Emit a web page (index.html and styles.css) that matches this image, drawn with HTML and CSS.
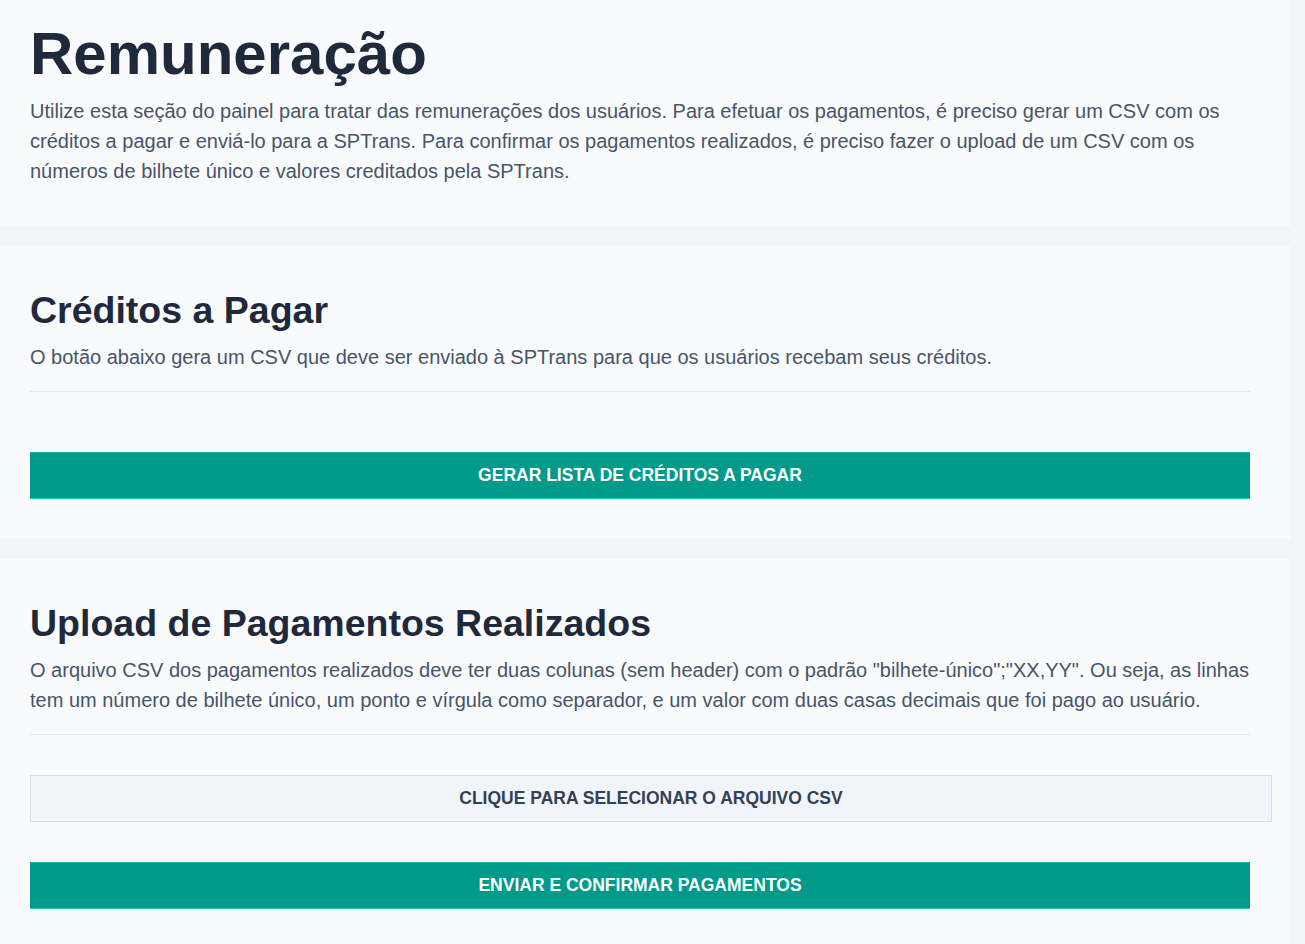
FILE: index.html
```html
<!DOCTYPE html>
<html lang="pt-BR">
<head>
<meta charset="utf-8">
<title>Remuneração</title>
<link rel="stylesheet" href="styles.css">
</head>
<body>
<main class="page">
  <section class="card card-intro">
    <h1 class="title">Remuneração</h1>
    <p class="text">Utilize esta seção do painel para tratar das remunerações dos usuários. Para efetuar os pagamentos, é preciso gerar um CSV com os créditos a pagar e enviá-lo para a SPTrans. Para confirmar os pagamentos realizados, é preciso fazer o upload de um CSV com os números de bilhete único e valores creditados pela SPTrans.</p>
  </section>
  <section class="card">
    <h2 class="subtitle">Créditos a Pagar</h2>
    <p class="text">O botão abaixo gera um CSV que deve ser enviado à SPTrans para que os usuários recebam seus créditos.</p>
    <hr class="divider">
    <button class="btn btn-spaced" type="button">Gerar lista de créditos a pagar</button>
  </section>
  <section class="card">
    <h2 class="subtitle">Upload de Pagamentos Realizados</h2>
    <p class="text">O arquivo CSV dos pagamentos realizados deve ter duas colunas (sem header) com o padrão "bilhete-único";"XX,YY". Ou seja, as linhas tem um número de bilhete único, um ponto e vírgula como separador, e um valor com duas casas decimais que foi pago ao usuário.</p>
    <hr class="divider">
    <label class="file-picker">Clique para selecionar o arquivo CSV</label>
    <button class="btn btn-send" type="button">Enviar e confirmar pagamentos</button>
  </section>
</main>
</body>
</html>
```
FILE: styles.css
```css
* { margin: 0; }
html, body {
  background: #f1f5f9;
}
body {
  margin: 0;
  font-family: "Liberation Sans", Arial, sans-serif;
  color: #1e293b;
}
.page {
  width: 1290px;
  display: flex;
  flex-direction: column;
  gap: 20px;
}
.card {
  background: #f8fafc;
  padding: 44px 40px 40px 30px;
  display: flex;
  flex-direction: column;
}
.card-intro {
  padding-top: 24px;
}
.title {
  font-size: 60px;
  line-height: 60px;
  font-weight: 700;
  color: #1e293b;
}
.subtitle {
  font-size: 37.5px;
  line-height: 40px;
  font-weight: 700;
  color: #1e293b;
}
.text {
  margin-top: 12px;
  font-size: 20px;
  line-height: 30px;
  color: #475569;
}
.divider {
  border: 0;
  height: 1px;
  background: #e2e8f0;
  margin-top: 19px;
}
.btn {
  display: block;
  width: 100%;
  height: 47px;
  background: #009a8a;
  border: 0;
  border-top: 1px solid #1db3a2;
  border-bottom: 1px solid #2ec9b6;
  color: #ffffff;
  font-family: "Liberation Sans", Arial, sans-serif;
  font-weight: 700;
  font-size: 17.5px;
  text-transform: uppercase;
  padding: 0;
}
.btn-spaced {
  margin-top: 60px;
}
.file-picker {
  display: block;
  box-sizing: content-box;
  width: 1220px;
  margin-top: 40px;
  height: 45px;
  line-height: 45px;
  padding: 0 10px;
  border: 1px solid #d5dde7;
  background: #f1f5f9;
  color: #334155;
  font-weight: 700;
  font-size: 17.5px;
  text-transform: uppercase;
  text-align: center;
}
.btn-send {
  margin-top: 40px;
}
```
